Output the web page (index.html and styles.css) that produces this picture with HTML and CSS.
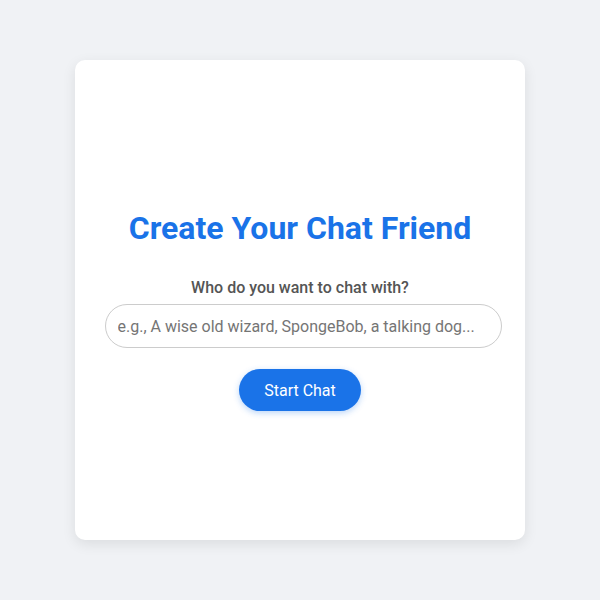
FILE: index.html
```html
<!DOCTYPE html>
<html>
<head>
<meta charset="utf-8">
<link rel="stylesheet" href="styles.css">
</head>
<body>
<div class="card">
  <h1 class="title">Create Your Chat Friend</h1>
  <label class="label" for="who">Who do you want to chat with?</label>
  <input id="who" class="input" type="text" placeholder="e.g., A wise old wizard, SpongeBob, a talking dog...">
  <button class="btn">Start Chat</button>
</div>
</body>
</html>
```
FILE: styles.css
```css
html, body {
  margin: 0;
  padding: 0;
}
body {
  background: #f0f2f5;
  width: 600px;
  height: 600px;
  display: flex;
  align-items: center;
  justify-content: center;
  font-family: Roboto, "Liberation Sans", sans-serif;
}
.card {
  box-sizing: border-box;
  width: 450px;
  height: 480px;
  background: #ffffff;
  border-radius: 10px;
  box-shadow: 0 4px 14px rgba(0, 0, 0, 0.09);
  display: flex;
  flex-direction: column;
  align-items: center;
  justify-content: center;
  padding-top: 20px;
}
.title {
  margin: 0 0 31px;
  font-size: 32px;
  line-height: 38px;
  font-weight: 700;
  color: #1a73e8;
}
.label {
  display: block;
  font-size: 16px;
  line-height: 19px;
  font-weight: 500;
  color: #555555;
  margin-bottom: 7px;
}
.input {
  box-sizing: border-box;
  width: 397px;
  height: 44px;
  border: 1px solid #cccccc;
  border-radius: 22px;
  padding: 0 12px;
  font-family: Roboto, "Liberation Sans", sans-serif;
  font-size: 16px;
  color: #333;
  outline: none;
  margin: 0 0 21px 6px;
}
.input::placeholder {
  color: #757575;
}
.btn {
  box-sizing: border-box;
  width: 122px;
  height: 42px;
  border: none;
  border-radius: 21px;
  background: #1a73e8;
  color: #ffffff;
  font-family: Roboto, "Liberation Sans", sans-serif;
  font-size: 16px;
  box-shadow: 0 2px 6px rgba(26, 115, 232, 0.3);
  cursor: pointer;
}
```
